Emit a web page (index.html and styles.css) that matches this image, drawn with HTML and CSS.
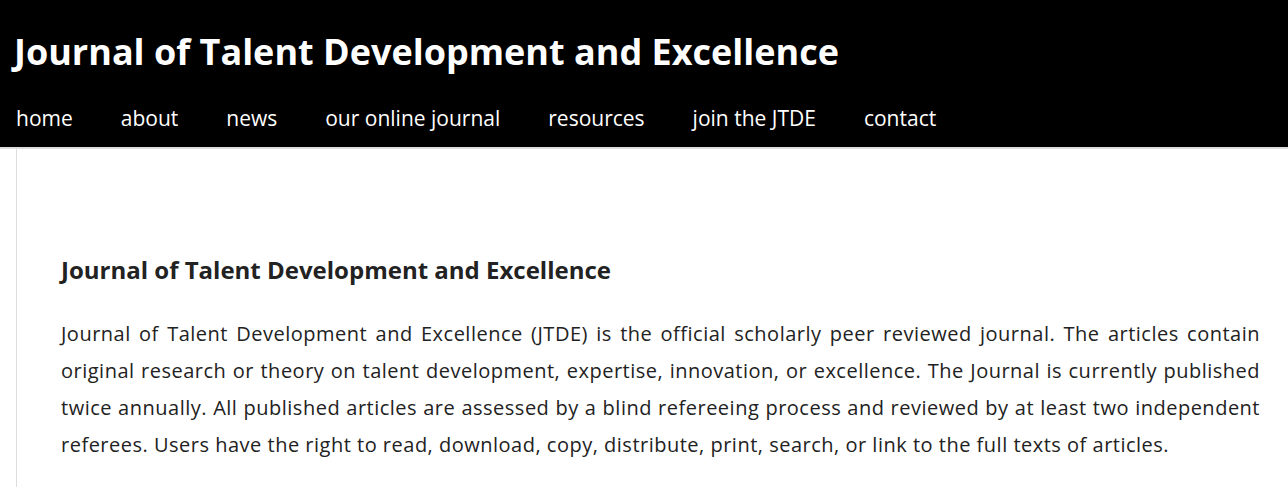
FILE: index.html
```html
<!DOCTYPE html>
<html lang="en">
<head>
  <meta charset="UTF-8" />
  <title>Journal of Talent Development and Excellence</title>
  <link rel="stylesheet" href="styles.css">
</head>
<body>

<header class="site-header">
  <h1 class="site-title">Journal of Talent Development and Excellence</h1>
  <nav class="main-nav">
    <a href="#">home</a>
    <a href="#">about</a>
    <a href="#">news</a>
    <a href="#">our online journal</a>
    <a href="#">resources</a>
    <a href="#">join the JTDE</a>
    <a href="#">contact</a>
  </nav>
</header>

<main class="page">
  <div class="content">
    <h2>Journal of Talent Development and Excellence</h2>
    <p>Journal of Talent Development and Excellence (JTDE) is the official scholarly peer reviewed journal. The articles contain original research or theory on talent development, expertise, innovation, or excellence. The Journal is currently published twice annually. All published articles are assessed by a blind refereeing process and reviewed by at least two independent referees. Users have the right to read, download, copy, distribute, print, search, or link to the full texts of articles.</p>
  </div>
</main>

</body>
</html>
```
FILE: styles.css
```css
body { margin: 0; font-family: "Open Sans", sans-serif; background: #fff; color: #222; }
.site-header { background: #000; color: #fff; border-bottom: 2px solid #ddd; }
.site-title { margin: 0; padding: 27px 13px 0 14px; font-size: 36px; font-weight: 700; line-height: 50px; }
.main-nav { display: flex; padding: 25px 0 13px; }
.main-nav a { color: #fff; text-decoration: none; font-size: 21px; padding: 0 24px; line-height: 32px; }
.main-nav a:first-child { padding-left: 16px; }
.page { margin-left: 16px; border-left: 1px solid #ddd; min-height: 338px; }
.content { padding: 104px 28px 0 44px; }
.content h2 { margin: 0 0 28px; font-size: 24px; font-weight: 700; line-height: 34px; }
.content p { margin: 0; font-size: 20px; letter-spacing: 0.5px; line-height: 37px; text-align: justify; }
```
